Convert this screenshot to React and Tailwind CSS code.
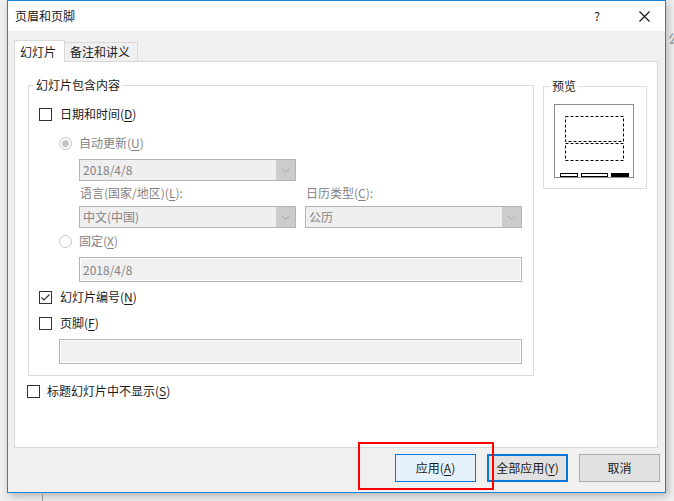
import React from "react";

const Key = ({ children }) => (
  <span className="underline underline-offset-[2px]">{children}</span>
);

const CheckBox = ({ checked }) => (
  <span className="w-[13px] h-[13px] border border-[#333333] bg-white flex items-center justify-center shrink-0">
    {checked && (
      <svg width="11" height="11" viewBox="0 0 11 11">
        <path d="M1.5 5.5 L4 8 L9.5 2.5" fill="none" stroke="#333333" strokeWidth="1.2" />
      </svg>
    )}
  </span>
);

const Radio = ({ selected }) => (
  <span className="w-[13px] h-[13px] rounded-full border border-[#c4c4c4] bg-white flex items-center justify-center shrink-0">
    {selected && <span className="w-[7px] h-[7px] rounded-full bg-[#c4c4c4]" />}
  </span>
);

const Combo = ({ value, className }) => (
  <div className={"h-[22px] border border-[#b4b4b4] bg-[#efefef] flex items-stretch " + className}>
    <span className="flex-1 pl-[3px] flex items-center text-[#838383]">{value}</span>
    <span className="w-[19px] bg-[#cccccc] flex items-center justify-center">
      <svg width="9" height="5" viewBox="0 0 9 5">
        <path d="M0.5 0.5 L4.5 4.5 L8.5 0.5" fill="none" stroke="#a8a8a8" strokeWidth="1" />
      </svg>
    </span>
  </div>
);

const Field = ({ value, className }) => (
  <div className={"h-[25px] border border-[#b4b4b4] bg-[#f0f0f0] shadow-[inset_0_0_0_1px_#ffffff] flex items-center pl-[3px] text-[#838383] " + className}>
    {value}
  </div>
);

const PreviewDrawing = () => (
  <svg width="78" height="72" viewBox="0 0 78 72">
    <rect x="10.5" y="11.5" width="58" height="25" fill="none" stroke="#000" strokeDasharray="3 2" />
    <rect x="10.5" y="38.5" width="58" height="17" fill="none" stroke="#000" strokeDasharray="3 2" />
    <rect x="5.5" y="68.5" width="17" height="3" fill="none" stroke="#000" />
    <rect x="26.5" y="68.5" width="26" height="3" fill="none" stroke="#000" />
    <rect x="56" y="68" width="18" height="4" fill="#000" />
  </svg>
);

export default function App() {
  return (
    <div className="relative w-[674px] h-[501px] bg-[#f0f0f0] overflow-hidden text-[12px] leading-[16px] text-[#1a1a1a] font-['Microsoft_YaHei_UI','Noto_Sans_CJK_SC',sans-serif]">
      {/* behind the dialog */}
      <div className="absolute left-[42px] top-[494px] w-px h-[8px] bg-[#a0a0a0]" />
      <div className="absolute left-[668px] top-[30px] text-[#9a9a9a] text-[13px]">公</div>

      <div className="relative ml-[7px] w-[659px] h-[493px] border border-[#1883d7] bg-[#f0f0f0] flex flex-col shadow-[2px_3px_8px_rgba(0,0,0,0.25)]">
        {/* title bar */}
        <div className="h-[30px] bg-white flex items-center pl-[7px] shrink-0">
          <span className="flex-1">页眉和页脚</span>
          <span className="w-[12px] text-center mr-[36px]">?</span>
          <span className="mr-[15px]">
            <svg width="11" height="11" viewBox="0 0 11 11">
              <path d="M0.5 0.5 L10.5 10.5 M10.5 0.5 L0.5 10.5" stroke="#111" strokeWidth="1.1" />
            </svg>
          </span>
        </div>

        <div className="flex flex-col pl-[6px] pt-[9px]">
          {/* tabs */}
          <div className="flex items-end h-[21px]">
            <div className="relative z-10 -mb-px h-[22px] w-[51px] bg-white border border-b-0 border-[#d9d9d9] flex items-center pl-[5px]">
              幻灯片
            </div>
            <div className="h-[19px] w-[73px] border border-l-0 border-b-0 border-[#d9d9d9] flex items-center pl-[5px]">
              备注和讲义
            </div>
          </div>

          {/* panel */}
          <div className="w-[644px] h-[387px] border border-[#d9d9d9] bg-white flex flex-col pl-[13px] pt-[23px]">
            <div className="flex items-start">
              {/* group */}
              <div className="relative w-[506px] border border-[#dcdcdc] pt-[18px] pb-[11px] pl-[10px] pr-[11px] flex flex-col">
                <span className="absolute -top-[9px] left-[5px] bg-white px-[2px]">幻灯片包含内容</span>

                <div className="h-[20px] flex items-center gap-[8px]">
                  <CheckBox />
                  <span>日期和时间(<Key>D</Key>)</span>
                </div>

                <div className="mt-[9px] h-[20px] flex items-center gap-[7px] pl-[20px] text-[#838383]">
                  <Radio selected />
                  <span>自动更新(<Key>U</Key>)</span>
                </div>

                <Combo value="2018/4/8" className="mt-[6px] ml-[40px] w-[217px]" />

                <div className="mt-[3px] h-[18px] flex items-center pl-[41px] text-[#838383]">
                  <span className="w-[226px]">语言(国家/地区)(<Key>L</Key>):</span>
                  <span>日历类型(<Key>C</Key>):</span>
                </div>

                <div className="mt-[4px] flex gap-[9px] pl-[40px]">
                  <Combo value="中文(中国)" className="w-[217px]" />
                  <Combo value="公历" className="w-[217px]" />
                </div>

                <div className="mt-[3px] h-[20px] flex items-center gap-[7px] pl-[20px] text-[#838383]">
                  <Radio />
                  <span>固定(<Key>X</Key>)</span>
                </div>

                <Field value="2018/4/8" className="mt-[6px] ml-[40px]" />

                <div className="mt-[5px] h-[20px] flex items-center gap-[8px]">
                  <CheckBox checked />
                  <span>幻灯片编号(<Key>N</Key>)</span>
                </div>

                <div className="mt-[6px] h-[20px] flex items-center gap-[8px]">
                  <CheckBox />
                  <span>页脚(<Key>F</Key>)</span>
                </div>

                <Field value="" className="mt-[6px] ml-[20px]" />
              </div>

              {/* preview */}
              <div className="relative mt-px ml-[9px] w-[104px] h-[103px] border border-[#dcdcdc] pt-[17px] pl-[10px]">
                <span className="absolute -top-[9px] left-[6px] bg-white px-[2px]">预览</span>
                <div className="w-[80px] h-[74px] border border-[#8c8c8c]">
                  <PreviewDrawing />
                </div>
              </div>
            </div>

            <div className="mt-[5px] h-[20px] flex items-center gap-[7px] -ml-px">
              <CheckBox />
              <span>标题幻灯片中不显示(<Key>S</Key>)</span>
            </div>
          </div>

          {/* buttons */}
          <div className="mt-[6px] flex justify-end pr-[5px] gap-[11px]">
            <button className="w-[81px] h-[28px] border border-[#0078d7] bg-[#e5f1fb]">
              应用(<Key>A</Key>)
            </button>
            <button className="w-[81px] h-[28px] border-2 border-[#0078d7] bg-[#e1e1e1]">
              全部应用(<Key>Y</Key>)
            </button>
            <button className="w-[81px] h-[28px] border border-[#adadad] bg-[#e1e1e1]">
              取消
            </button>
          </div>
        </div>
      </div>

      {/* annotation */}
      <div className="absolute left-[358px] top-[442px] w-[136px] h-[48px] border-2 border-[#ff0000] pointer-events-none" />
    </div>
  );
}
